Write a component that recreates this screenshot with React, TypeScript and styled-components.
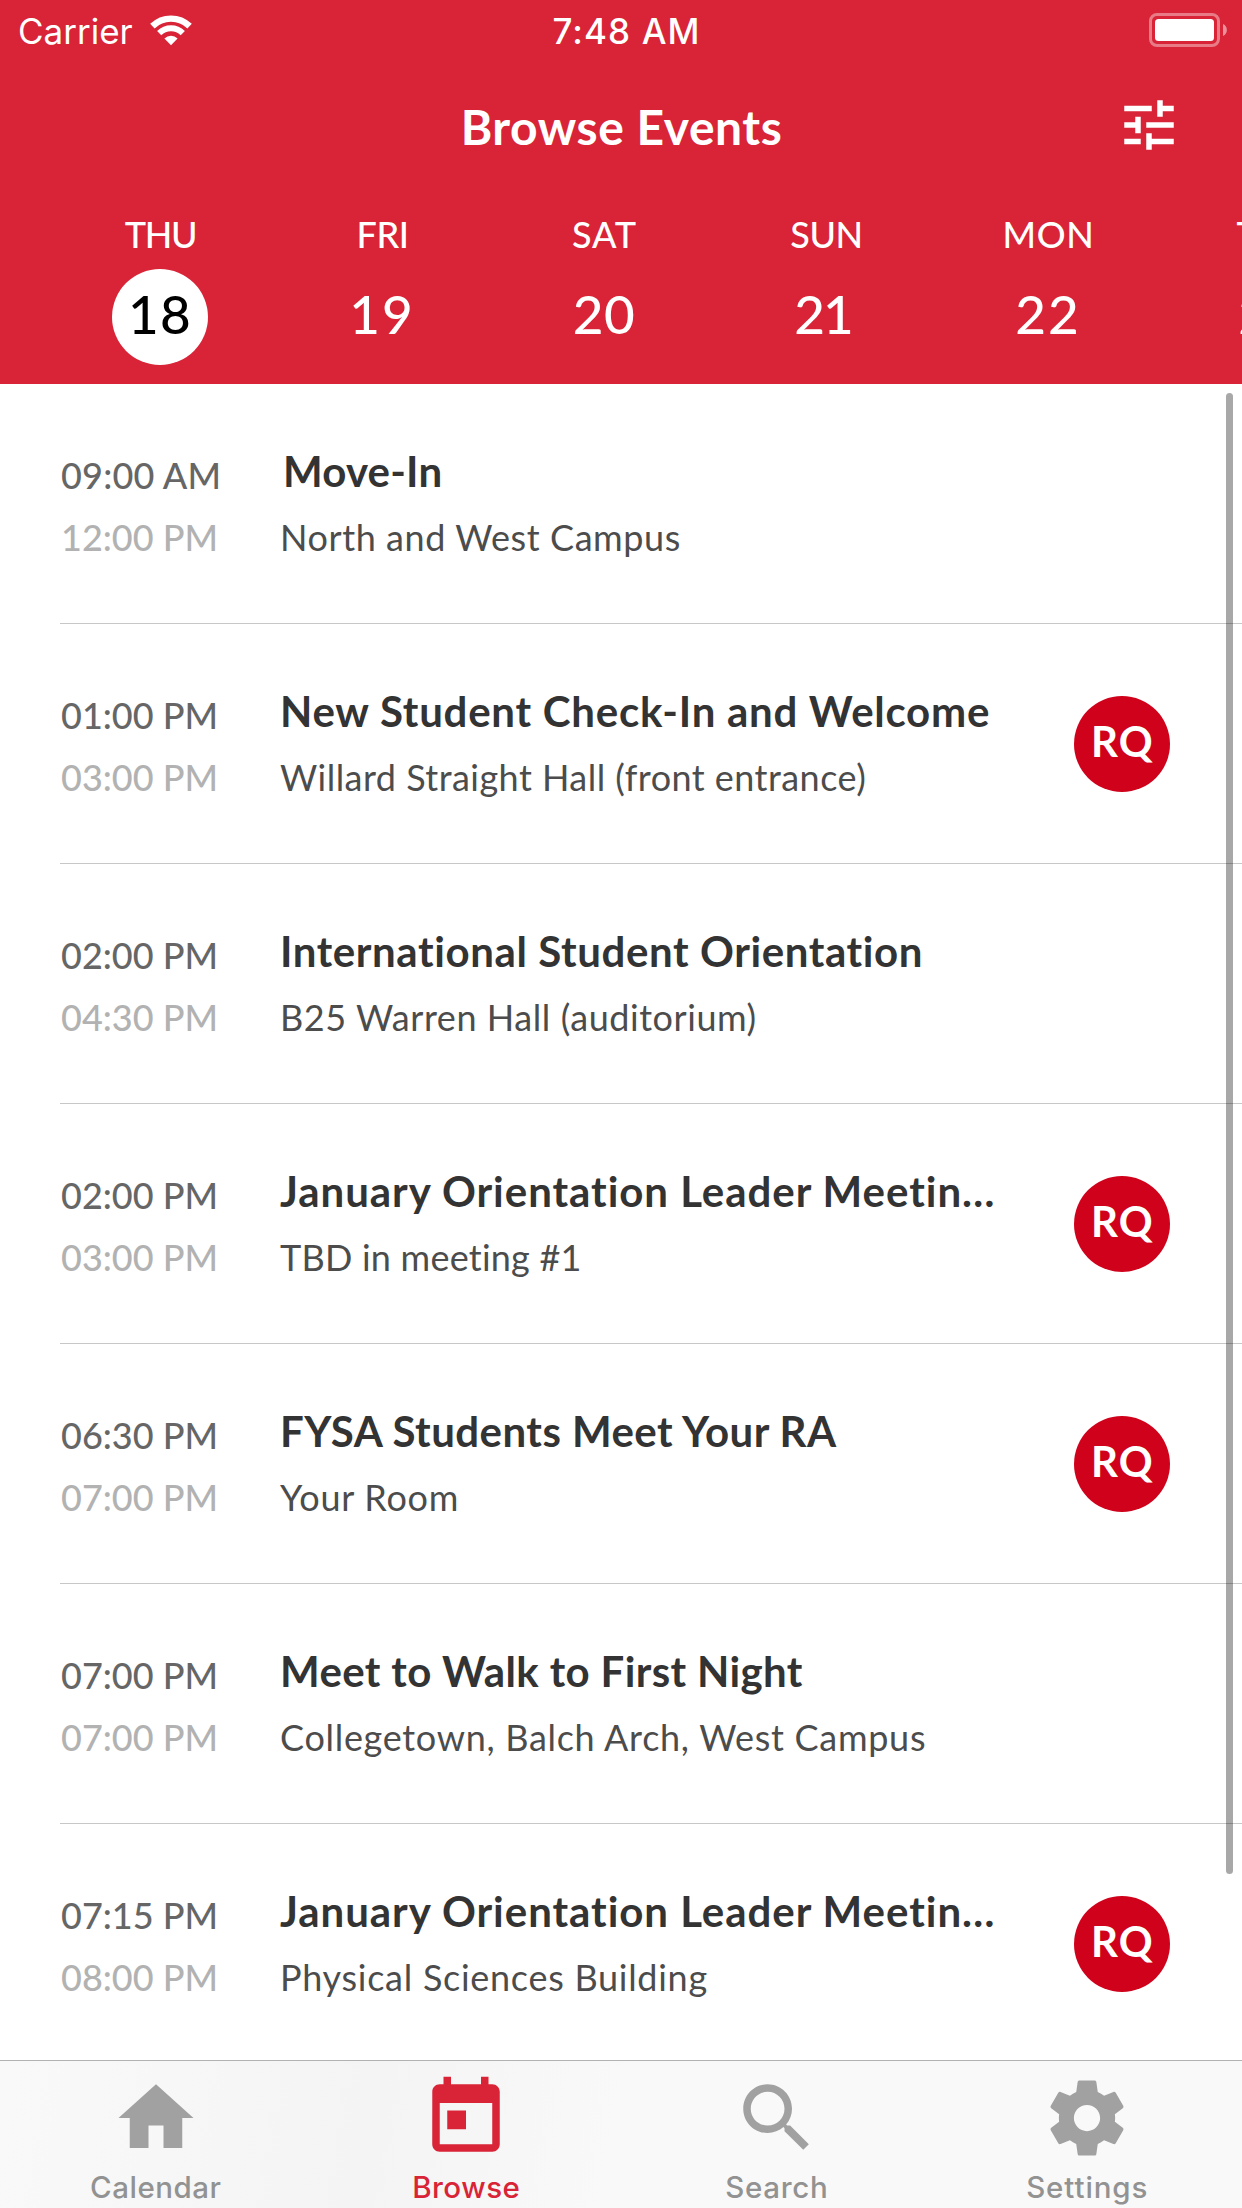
import React from 'react';
import styled, { createGlobalStyle } from 'styled-components';

const brand = '#d92336';
const textFont = 'Lato, "Open Sans", sans-serif';
const systemFont = 'Inter, Roboto, sans-serif';

const GlobalStyle = createGlobalStyle`
  *, *::before, *::after { box-sizing: border-box; }
  body { margin: 0; background: #fff; -webkit-font-smoothing: antialiased; }
`;

const Screen = styled.div`
  display: flex;
  flex-direction: column;
  width: 1242px;
  height: 2208px;
  overflow: hidden;
  background: #fff;
  font-family: ${textFont};
  white-space: nowrap;
`;

const Header = styled.header`
  flex: none;
  height: 384px;
  background: ${brand};
  color: #fff;
`;

const StatusBar = styled.div`
  display: grid;
  grid-template-columns: 1fr auto 1fr;
  height: 60px;
  padding: 0 15px 0 18px;
  font: 400 35px/62px ${systemFont};
`;

const Carrier = styled.div`
  display: flex;
  gap: 17px;
  svg { margin-top: 15px; }
`;

const Clock = styled.div`
  padding-left: 8px;
  font-weight: 500;
  letter-spacing: 1.1px;
`;

const BatteryBox = styled.div`
  display: flex;
  justify-content: flex-end;
  svg { margin-top: 13px; }
`;

const NavBar = styled.div`
  display: grid;
  grid-template-columns: 1fr auto 1fr;
  align-items: center;
  height: 132px;
  padding: 0 60px;
`;

const NavTitle = styled.h1`
  grid-column: 2;
  margin: 0;
  padding: 1px 0 0 1px;
  font-size: 48px;
  font-weight: 700;
  line-height: 58px;
  letter-spacing: 0.53px;
`;

const FilterButton = styled.button`
  justify-self: end;
  width: 66px;
  height: 66px;
  margin: 0 0 2px;
  padding: 0;
  border: 0;
  background: none;
  color: #fff;
  svg { display: block; }
`;

const DayStrip = styled.div`
  display: flex;
  padding: 20px 0 0 49px;
  overflow: hidden;
`;

const Day = styled.div`
  flex: 0 0 222px;
  display: flex;
  flex-direction: column;
  align-items: center;
`;

const DayName = styled.span<{ $ls: number }>`
  padding-left: 1px;
  font-size: 36px;
  font-weight: 500;
  line-height: 44px;
  letter-spacing: ${(p) => p.$ls}px;
`;

const DayNumber = styled.span<{ $selected: boolean; $ls: number; $inset: number }>`
  display: flex;
  justify-content: center;
  width: 96px;
  height: 96px;
  margin-top: 13px;
  padding-right: ${(p) => p.$inset}px;
  border-radius: 50%;
  background: ${(p) => (p.$selected ? '#fff' : 'transparent')};
  color: ${(p) => (p.$selected ? '#000' : '#fff')};
  font-size: 53px;
  font-weight: 500;
  line-height: 90px;
  letter-spacing: ${(p) => p.$ls}px;
`;

const EventList = styled.main`
  position: relative;
  flex: 1;
  min-height: 0;
  overflow: hidden;
`;

const ScrollThumb = styled.div`
  position: absolute;
  top: 9px;
  right: 9px;
  width: 7px;
  height: 1481px;
  border-radius: 4px;
  background: rgba(0, 0, 0, 0.34);
`;

const EventRow = styled.article`
  display: flex;
  height: 240px;
  margin-left: 60px;
  border-bottom: 1px solid #c7c7c7;
`;

const Times = styled.div`
  flex: 0 0 220px;
  padding: 60px 0 0 1px;
  font-size: 36px;
  font-weight: 500;
  line-height: 62px;
`;

const StartTime = styled.div<{ $ls: number }>`
  color: #666;
  letter-spacing: ${(p) => p.$ls}px;
`;

const EndTime = styled.div`
  color: #b2b2b2;
`;

const Details = styled.div`
  flex: 1;
  min-width: 0;
  padding-top: 62px;
`;

const EventTitle = styled.h2<{ $ls: number; $inset?: number }>`
  margin: 0;
  padding-left: ${(p) => p.$inset ?? 0}px;
  color: #333;
  font-size: 42px;
  font-weight: 700;
  line-height: 50px;
  letter-spacing: ${(p) => p.$ls}px;
`;

const Place = styled.p<{ $ls: number }>`
  margin: 19px 0 0;
  color: #4c4c4c;
  font-size: 36px;
  line-height: 44px;
  letter-spacing: ${(p) => p.$ls}px;
`;

const Badge = styled.div`
  align-self: center;
  width: 96px;
  height: 96px;
  margin: 1px 72px 0 0;
  padding-left: 1px;
  border-radius: 50%;
  background: #d0021b;
  color: #fff;
  font-size: 42px;
  font-weight: 700;
  line-height: 90px;
  letter-spacing: 1.2px;
  text-align: center;
`;

const TabBar = styled.nav`
  flex: none;
  display: flex;
  height: 148px;
  border-top: 1px solid #b2b2b2;
  background: linear-gradient(100deg, #f9f9f9 0%, #f7f7f7 14%, #f4f4f4 30%, #f9f9f9 50%);
`;

const Tab = styled.a<{ $active: boolean }>`
  flex: 1;
  display: flex;
  flex-direction: column;
  align-items: center;
  padding: 12px 0 0 1px;
  color: ${(p) => (p.$active ? brand : '#a1a1a1')};
  svg { display: block; }
`;

const TabLabel = styled.span<{ $active: boolean; $ls: number }>`
  margin-top: 6px;
  color: ${(p) => (p.$active ? brand : '#929292')};
  font: 500 29.5px/36px ${systemFont};
  letter-spacing: ${(p) => p.$ls}px;
`;

const Glyph = ({ d, size }: { d: string; size: number }) => (
  <svg width={size} height={size} viewBox="0 0 24 24" fill="currentColor">
    <path d={d} />
  </svg>
);

const icons = {
  tune: 'M3 17v2h6v-2H3zM3 5v2h10V5H3zm10 16v-2h8v-2h-8v-2h-2v6h2zM7 9v2H3v2h4v2h2V9H7zm14 4v-2H11v2h10zm-6-4h2V7h4V5h-4V3h-2v6z',
  home: 'M10 20v-6h4v6h5v-8h3L12 3 2 12h3v8z',
  today:
    'M19 3h-1V1h-2v2H8V1H6v2H5c-1.11 0-1.99.9-1.99 2L3 19c0 1.1.89 2 2 2h14c1.1 0 2-.9 2-2V5c0-1.1-.9-2-2-2zm0 16H5V8h14v11zM7 10h5v5H7z',
  search:
    'M15.5 14h-.79l-.28-.27C15.41 12.59 16 11.11 16 9.5 16 5.91 13.09 3 9.5 3S3 5.91 3 9.5 5.91 16 9.5 16c1.61 0 3.09-.59 4.23-1.57l.27.28v.79l5 4.99L20.49 19l-4.99-5zm-6 0C7.01 14 5 11.99 5 9.5S7.01 5 9.5 5 14 7.01 14 9.5 11.99 14 9.5 14z',
  settings:
    'M19.43 12.98c.04-.32.07-.64.07-.98s-.03-.66-.07-.98l2.11-1.65c.19-.15.24-.42.12-.64l-2-3.46c-.12-.22-.39-.3-.61-.22l-2.49 1c-.52-.4-1.08-.73-1.69-.98l-.38-2.65C14.46 2.18 14.25 2 14 2h-4c-.25 0-.46.18-.49.42l-.38 2.65c-.61.25-1.17.59-1.69.98l-2.49-1c-.23-.09-.49 0-.61.22l-2 3.46c-.13.22-.07.49.12.64l2.11 1.65c-.04.32-.07.65-.07.98s.03.66.07.98l-2.11 1.65c-.19.15-.24.42-.12.64l2 3.46c.12.22.39.3.61.22l2.49-1c.52.4 1.08.73 1.69.98l.38 2.65c.03.24.24.42.49.42h4c.25 0 .46-.18.49-.42l.38-2.65c.61-.25 1.17-.59 1.69-.98l2.49 1c.23.09.49 0 .61-.22l2-3.46c.12-.22.07-.49-.12-.64l-2.11-1.65zM12 15.5c-1.93 0-3.5-1.57-3.5-3.5s1.57-3.5 3.5-3.5 3.5 1.57 3.5 3.5-1.57 3.5-3.5 3.5z',
};

const WifiIcon = () => (
  <svg width="43" height="31" viewBox="0 0 43 31" fill="none" stroke="#fff">
    <path d="M2.4 11.1A26.75 26.75 0 0 1 39.6 11.1" strokeWidth="6.4" />
    <path d="M9.2 18.1A17 17 0 0 1 32.8 18.1" strokeWidth="6" />
    <path d="M21 30.3L14.4 23.5A9.5 9.5 0 0 1 27.6 23.5Z" fill="#fff" stroke="none" />
  </svg>
);

const BatteryIcon = () => (
  <svg width="78" height="34" viewBox="0 0 78 34">
    <rect x="1.5" y="1.5" width="68" height="31" rx="6.5" fill="none" stroke="#fff" strokeOpacity="0.4" strokeWidth="3" />
    <rect x="6" y="6" width="59" height="22" rx="3.5" fill="#fff" />
    <path d="M74 11a6.6 6.6 0 0 1 0 12z" fill="#fff" fillOpacity="0.5" />
  </svg>
);

const days = [
  { name: 'THU', num: 18, nameLs: -1.4, ls: 1.2, inset: 0 },
  { name: 'FRI', num: 19, nameLs: -0.4, ls: 2, inset: -2 },
  { name: 'SAT', num: 20, nameLs: 0.8, ls: 0.5, inset: 0 },
  { name: 'SUN', num: 21, nameLs: -0.4, ls: -2, inset: 6 },
  { name: 'MON', num: 22, nameLs: 0.7, ls: 2, inset: -1 },
  { name: 'TUE', num: 23, nameLs: -0.2, ls: 1, inset: 0 },
];

const events = [
  { start: '09:00 AM', end: '12:00 PM', title: 'Move-In', place: 'North and West Campus', ls: 0.2, placeLs: 0.57, inset: 3, required: false },
  { start: '01:00 PM', end: '03:00 PM', title: 'New Student Check-In and Welcome', place: 'Willard Straight Hall (front entrance)', ls: 0.75, placeLs: 0.46, required: true },
  { start: '02:00 PM', end: '04:30 PM', title: 'International Student Orientation', place: 'B25 Warren Hall (auditorium)', ls: 0.6, placeLs: 0.56, required: false },
  { start: '02:00 PM', end: '03:00 PM', title: 'January Orientation Leader Meetin…', place: 'TBD in meeting #1', ls: 0.96, placeLs: 0.22, required: true },
  { start: '06:30 PM', end: '07:00 PM', title: 'FYSA Students Meet Your RA', place: 'Your Room', ls: 0.45, placeLs: 0.75, required: true },
  { start: '07:00 PM', end: '07:00 PM', title: 'Meet to Walk to First Night', place: 'Collegetown, Balch Arch, West Campus', ls: 0.36, placeLs: 0.7, required: false },
  { start: '07:15 PM', end: '08:00 PM', title: 'January Orientation Leader Meetin…', place: 'Physical Sciences Building', ls: 0.96, placeLs: 0.72, required: true },
];

const tabs = [
  { label: 'Calendar', icon: icons.home, active: false, ls: 0.5 },
  { label: 'Browse', icon: icons.today, active: true, ls: 0.5 },
  { label: 'Search', icon: icons.search, active: false, ls: 0.7 },
  { label: 'Settings', icon: icons.settings, active: false, ls: 0.9 },
];

export default function App() {
  return (
    <Screen>
      <GlobalStyle />
      <Header>
        <StatusBar>
          <Carrier>
            Carrier
            <WifiIcon />
          </Carrier>
          <Clock>7:48 AM</Clock>
          <BatteryBox>
            <BatteryIcon />
          </BatteryBox>
        </StatusBar>
        <NavBar>
          <NavTitle>Browse Events</NavTitle>
          <FilterButton aria-label="Filter">
            <Glyph d={icons.tune} size={66} />
          </FilterButton>
        </NavBar>
        <DayStrip>
          {days.map((d) => (
            <Day key={d.num}>
              <DayName $ls={d.nameLs}>{d.name}</DayName>
              <DayNumber $selected={d.num === 18} $ls={d.ls} $inset={Math.max(d.inset, 0)}>
                {d.num}
              </DayNumber>
            </Day>
          ))}
        </DayStrip>
      </Header>
      <EventList>
        {events.map((e, i) => (
          <EventRow key={i}>
            <Times>
              <StartTime $ls={e.start.endsWith('AM') ? 0.2 : 0}>{e.start}</StartTime>
              <EndTime>{e.end}</EndTime>
            </Times>
            <Details>
              <EventTitle $ls={e.ls} $inset={e.inset}>
                {e.title}
              </EventTitle>
              <Place $ls={e.placeLs}>{e.place}</Place>
            </Details>
            {e.required && <Badge>RQ</Badge>}
          </EventRow>
        ))}
        <ScrollThumb />
      </EventList>
      <TabBar>
        {tabs.map((t) => (
          <Tab key={t.label} $active={t.active}>
            <Glyph d={t.icon} size={90} />
            <TabLabel $active={t.active} $ls={t.ls}>
              {t.label}
            </TabLabel>
          </Tab>
        ))}
      </TabBar>
    </Screen>
  );
}
